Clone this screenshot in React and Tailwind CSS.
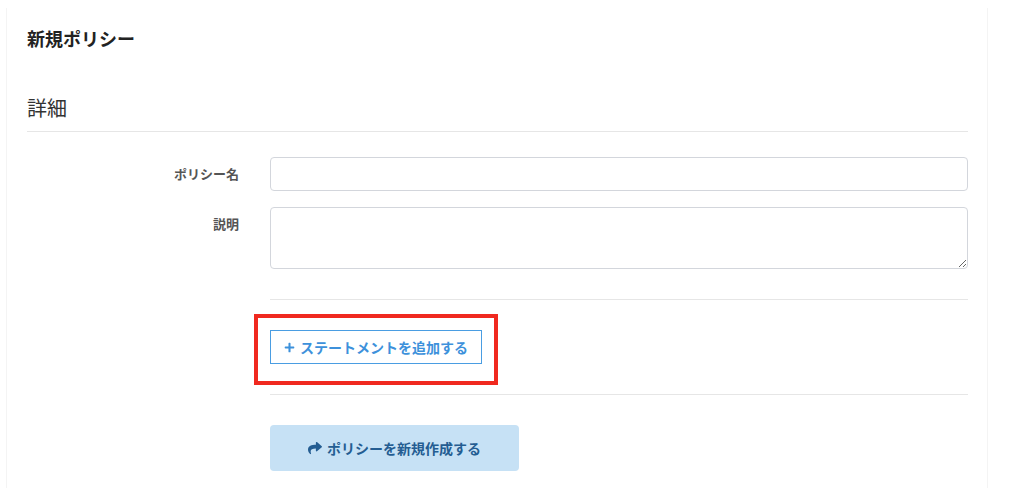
import React from 'react';
import { FaPlus, FaShare } from 'react-icons/fa';

const FormRow = ({ label, children }) => (
    <div className="flex">
        <label className="w-[243px] shrink-0 pr-[31px] pt-[7px] text-right text-[13px] font-bold leading-5 text-[#555]">
            {label}
        </label>
        <div className="flex-1">{children}</div>
    </div>
);

const App = () => {
    return (
        <div className="h-[488px] overflow-hidden bg-white pt-2" style={{ fontFamily: '"Noto Sans CJK JP", "Noto Sans", sans-serif' }}>
            <div className="ml-[6px] mr-[25px] h-full border-x border-[#f4f4f4] pl-[20px] pr-[19px] pt-[18px]">
                <h1 className="text-[18px] font-bold leading-6 text-[#222]">新規ポリシー</h1>

                <h2 className="mt-[44px] border-b border-[#e6e6e6] pb-[9px] text-[20px] leading-7 text-[#333]">詳細</h2>

                <div className="mt-[25px] flex flex-col gap-4">
                    <FormRow label="ポリシー名">
                        <input
                            type="text"
                            className="block h-[34px] w-full rounded border border-[#d3d6dc] bg-white px-3 text-sm outline-none"
                        />
                    </FormRow>
                    <FormRow label="説明">
                        <textarea className="block h-[62px] w-full rounded border border-[#d3d6dc] bg-white px-3 py-1.5 text-sm outline-none" />
                    </FormRow>
                </div>

                <div className="ml-[243px]">
                    <div className="mt-[30px] border-t border-[#e6e6e6]" />

                    <div className="relative mt-[30px] w-[212px]">
                        <button className="flex h-[34px] w-[212px] items-center justify-center gap-[5px] whitespace-nowrap border border-[#4a9de2] bg-white text-sm font-bold text-[#3d91db]">
                            <FaPlus className="h-[11px] w-[11px] shrink-0" />
                            ステートメントを追加する
                        </button>
                        {/* annotation box */}
                        <div className="pointer-events-none absolute -bottom-[21px] -left-4 -right-4 -top-4 border-4 border-[#f0291f]" />
                    </div>

                    <div className="mt-[30px] border-t border-[#e6e6e6]" />

                    <button className="mt-[30px] flex h-[46px] w-[249px] items-center justify-center gap-[5px] whitespace-nowrap rounded bg-[#c6e1f5] text-sm font-bold text-[#245d92]">
                        <FaShare className="h-[14px] w-[14px] shrink-0" />
                        ポリシーを新規作成する
                    </button>
                </div>
            </div>
        </div>
    );
};

export default App;
